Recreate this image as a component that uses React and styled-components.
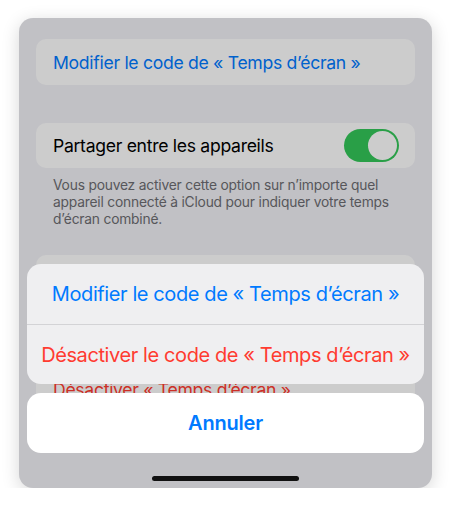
import React from 'react'
import styled, { createGlobalStyle } from 'styled-components'

const GlobalStyle = createGlobalStyle`
    html, body {
        margin: 0;
        padding: 0;
        background: #ffffff;
    }

    body {
        font-family: Inter, "Noto Sans", "Liberation Sans", sans-serif;
        -webkit-font-smoothing: antialiased;
    }
`

const Page = styled.div`
    padding: 18px 0 0 19px;
`

const Screen = styled.div`
    position: relative;
    width: 413px;
    height: 470px;
    border-radius: 14px;
    overflow: hidden;
    background-color: #f2f2f7;
    box-shadow: 0 4px 18px rgba(0, 0, 0, 0.16);
`

const Settings = styled.div`
    padding: 21px 17px 0;
    display: flex;
    flex-direction: column;
`

const Cell = styled.div`
    height: ${props => props.height || 46}px;
    margin-top: ${props => props.gap || 0}px;
    padding: 0 16px 0 17px;
    border-radius: 10px;
    background-color: #ffffff;

    display: flex;
    align-items: center;
    justify-content: space-between;

    font-size: 17.6px;
    letter-spacing: -0.3px;
    color: ${props => props.color || '#000000'};
`

const Footnote = styled.p`
    margin: 9px 0 0;
    padding: 0 8px 0 17px;
    font-size: 13.8px;
    line-height: 17px;
    letter-spacing: -0.2px;
    color: #6d6d72;
`

const Toggle = styled.div`
    width: 55px;
    height: 33px;
    border-radius: 17px;
    background-color: #34c759;
    position: relative;

    &::after {
        content: '';
        position: absolute;
        top: 2px;
        right: 2px;
        width: 29px;
        height: 29px;
        border-radius: 50%;
        background-color: #ffffff;
    }
`

const Dim = styled.div`
    position: absolute;
    inset: 0;
    background-color: rgba(0, 0, 0, 0.2);
`

const Sheet = styled.div`
    position: absolute;
    left: 8px;
    right: 8px;
    bottom: 35px;

    display: flex;
    flex-direction: column;
    gap: 9px;
`

const SheetGroup = styled.div`
    border-radius: 14px;
    overflow: hidden;
    background-color: ${props => props.cancel ? '#ffffff' : '#efeff1'};
`

const SheetButton = styled.div`
    height: 60px;
    display: flex;
    align-items: center;
    justify-content: center;

    font-size: 20px;
    font-weight: ${props => props.bold ? 600 : 400};
    letter-spacing: ${props => props.bold ? '-0.2px' : '-0.4px'};
    color: ${props => props.destructive ? '#ff3b30' : '#007aff'};

    & + & {
        border-top: 1px solid #d3d3d6;
        height: 59px;
    }
`

const HomeIndicator = styled.div`
    position: absolute;
    left: 50%;
    bottom: 7px;
    width: 147px;
    height: 5px;
    margin-left: -73.5px;
    border-radius: 3px;
    background-color: #111111;
`

export default function App() {
    return (
        <Page>
            <GlobalStyle />
            <Screen>
                <Settings>
                    <Cell color="#007aff">Modifier le code de « Temps d’écran »</Cell>
                    <Cell gap={38} height={45}>
                        <span>Partager entre les appareils</span>
                        <Toggle />
                    </Cell>
                    <Footnote>
                        Vous pouvez activer cette option sur n’importe quel appareil connecté à iCloud pour indiquer votre temps d’écran combiné.
                    </Footnote>
                    <Cell gap={27} height={45} />
                    <Cell gap={67} height={45} color="#ff3b30">Désactiver « Temps d’écran »</Cell>
                </Settings>
                <Dim />
                <Sheet>
                    <SheetGroup>
                        <SheetButton>Modifier le code de « Temps d’écran »</SheetButton>
                        <SheetButton destructive>Désactiver le code de « Temps d’écran »</SheetButton>
                    </SheetGroup>
                    <SheetGroup cancel>
                        <SheetButton bold>Annuler</SheetButton>
                    </SheetGroup>
                </Sheet>
                <HomeIndicator />
            </Screen>
        </Page>
    )
}
